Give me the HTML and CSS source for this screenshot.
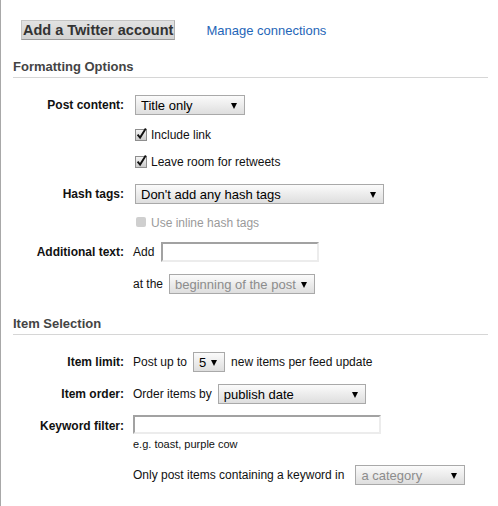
FILE: index.html
```html
<!DOCTYPE html>
<html>
<head>
<meta charset="utf-8">
<link rel="stylesheet" href="styles.css">
</head>
<body>
<div class="page">
  <div class="top">
    <button class="btn" type="button">Add a Twitter account</button>
    <a class="link" href="#">Manage connections</a>
  </div>

  <section class="section">
    <h2 class="head">Formatting Options</h2>

    <div class="row r-first">
      <span class="lbl">Post content:</span>
      <div class="ctl">
        <span class="sel w-title"><select><option>Title only</option></select></span>
      </div>
    </div>

    <div class="row r-check1">
      <span class="lbl"></span>
      <label class="ctl chk">
        <svg class="cb" width="14" height="14" viewBox="0 0 14 14"><defs><linearGradient id="g1" x1="0" y1="0" x2="0" y2="1"><stop offset="0" stop-color="#f6f6f6"/><stop offset="1" stop-color="#c9c9c9"/></linearGradient></defs><rect x="0.5" y="2.5" width="11" height="11" fill="url(#g1)" stroke="#8e8e8e"/><path d="M2.6 7.6 L5.1 10.6 L10.8 1.6" fill="none" stroke="#111" stroke-width="1.9"/></svg>
        <span>Include link</span>
      </label>
    </div>

    <div class="row r-check2">
      <span class="lbl"></span>
      <label class="ctl chk">
        <svg class="cb" width="14" height="14" viewBox="0 0 14 14"><defs><linearGradient id="g2" x1="0" y1="0" x2="0" y2="1"><stop offset="0" stop-color="#f6f6f6"/><stop offset="1" stop-color="#c9c9c9"/></linearGradient></defs><rect x="0.5" y="2.5" width="11" height="11" fill="url(#g2)" stroke="#8e8e8e"/><path d="M2.6 7.6 L5.1 10.6 L10.8 1.6" fill="none" stroke="#111" stroke-width="1.9"/></svg>
        <span>Leave room for retweets</span>
      </label>
    </div>

    <div class="row r-sel-after-check">
      <span class="lbl">Hash tags:</span>
      <div class="ctl">
        <span class="sel w-hash"><select><option>Don't add any hash tags</option></select></span>
      </div>
    </div>

    <div class="row r-check3">
      <span class="lbl"></span>
      <label class="ctl chk disabled">
        <svg class="cb" width="14" height="14" viewBox="0 0 14 14"><rect x="1" y="2" width="10" height="10" rx="2" fill="#cfcfcf"/></svg>
        <span>Use inline hash tags</span>
      </label>
    </div>

    <div class="row r-input">
      <span class="lbl">Additional text:</span>
      <div class="ctl text">
        <span>Add</span>
        <input class="inp w-add" type="text">
      </div>
    </div>

    <div class="row r-pos">
      <span class="lbl"></span>
      <div class="ctl text">
        <span>at the</span>
        <span class="sel w-pos off"><select disabled><option>beginning of the post</option></select></span>
      </div>
    </div>
  </section>

  <section class="section">
    <h2 class="head h-second">Item Selection</h2>

    <div class="row r-first">
      <span class="lbl">Item limit:</span>
      <div class="ctl text">
        <span>Post up to</span>
        <span class="sel w-num"><select><option>5</option></select></span>
        <span>new items per feed update</span>
      </div>
    </div>

    <div class="row r-order">
      <span class="lbl">Item order:</span>
      <div class="ctl text">
        <span>Order items by</span>
        <span class="sel w-order"><select><option>publish date</option></select></span>
      </div>
    </div>

    <div class="row r-key">
      <span class="lbl">Keyword filter:</span>
      <div class="ctl">
        <input class="inp w-key" type="text">
      </div>
    </div>

    <div class="row r-hint">
      <span class="lbl"></span>
      <div class="ctl hint">e.g. toast, purple cow</div>
    </div>

    <div class="row r-cat">
      <span class="lbl"></span>
      <div class="ctl text gap-wide">
        <span>Only post items containing a keyword in</span>
        <span class="sel w-cat off"><select disabled><option>a category</option></select></span>
      </div>
    </div>
  </section>
</div>
</body>
</html>
```

FILE: styles.css
```css
html, body {
  margin: 0;
  padding: 0;
  background: #fff;
}

body {
  font-family: "Liberation Sans", Arial, sans-serif;
  color: #111;
}

.page {
  border-left: 1px solid #a8a8a8;
  min-height: 506px;
  box-sizing: border-box;
}

.top {
  display: flex;
  align-items: center;
  gap: 31px;
  padding: 20px 0 0 20px;
}

.btn {
  height: 20px;
  margin: 0;
  padding: 0 1px;
  font-family: "Liberation Sans", Arial, sans-serif;
  font-size: 14.5px;
  font-weight: bold;
  line-height: 18px;
  color: #333;
  background: linear-gradient(#e2e2e2, #d3d3d3);
  border: 1px solid #c4c4c4;
  border-bottom-color: #9a9a9a;
  border-right-color: #b0b0b0;
  border-radius: 0;
  cursor: pointer;
}

.link {
  font-size: 13px;
  color: #1f66b8;
  text-decoration: none;
  margin-top: 1px;
}

.section {
  margin: 0 10px 0 12px;
}

.head {
  margin: 19px 0 0 0;
  padding: 0 0 2px 0;
  font-size: 13px;
  font-weight: bold;
  line-height: 16px;
  color: #444;
  border-bottom: 1px solid #d6d6d6;
}

.h-second {
  margin-top: 21px;
}

.row {
  display: flex;
  align-items: center;
  height: 22px;
  gap: 9px;
}

.r-first { margin-top: 16px; }
.r-check1 { margin-top: 8px; }
.r-check2 { margin-top: 5px; }
.r-sel-after-check { margin-top: 10px; }
.r-check3 { margin-top: 7px; }
.r-input { margin-top: 7px; }
.r-pos { margin-top: 10px; }
.r-order { margin-top: 10px; }
.r-key { margin-top: 9px; height: 20px; }
.r-hint { margin-top: 2px; height: 16px; }
.r-cat { margin-top: 12px; }

.lbl {
  flex: 0 0 111px;
  text-align: right;
  font-size: 12px;
  font-weight: bold;
  color: #111;
}

.r-key .lbl {
  margin-top: 3px;
}

.ctl {
  display: flex;
  align-items: center;
  font-size: 12px;
  color: #111;
}

.ctl.text {
  gap: 6px;
}

.ctl.gap-wide {
  gap: 11px;
}

.chk {
  margin-left: 2px;
  gap: 2px;
}

.cb {
  display: block;
  margin-top: -3px;
}

.chk.disabled {
  color: #9a9a9a;
}

.hint {
  font-size: 11px;
}

.sel {
  position: relative;
  display: inline-block;
}

.sel::after {
  content: "";
  position: absolute;
  right: 8px;
  top: 8px;
  border-left: 3.5px solid transparent;
  border-right: 3.5px solid transparent;
  border-top: 6px solid #000;
  pointer-events: none;
}

.sel select {
  appearance: none;
  -webkit-appearance: none;
  display: block;
  width: 100%;
  height: 20px;
  margin: 0;
  padding: 0 16px 0 5px;
  font-family: "Liberation Sans", Arial, sans-serif;
  font-size: 13px;
  color: #000;
  background: linear-gradient(#fbfbfb, #dedede);
  border: 1px solid #a9a9a9;
  border-radius: 0;
}

.sel.off select {
  color: #8c8c8c;
  opacity: 1;
}

.ctl:not(.text) > .sel {
  margin-left: 2px;
}

.w-title { width: 110px; }
.w-hash { width: 249px; }
.w-pos { width: 146px; }
.w-num { width: 32px; }
.w-order { width: 148px; }
.w-cat { width: 110px; }

.inp {
  box-sizing: border-box;
  margin: 0;
  padding: 0 3px;
  font-family: "Liberation Sans", Arial, sans-serif;
  font-size: 13px;
  background: #fff;
  border-style: solid;
  border-width: 2px;
  border-color: #a2a2a2 #ececec #ececec #a2a2a2;
  border-radius: 0;
  outline: none;
}

.w-add {
  width: 158px;
  height: 20px;
  margin-left: 1px;
}

.w-key {
  width: 248px;
  height: 19px;
}
```
